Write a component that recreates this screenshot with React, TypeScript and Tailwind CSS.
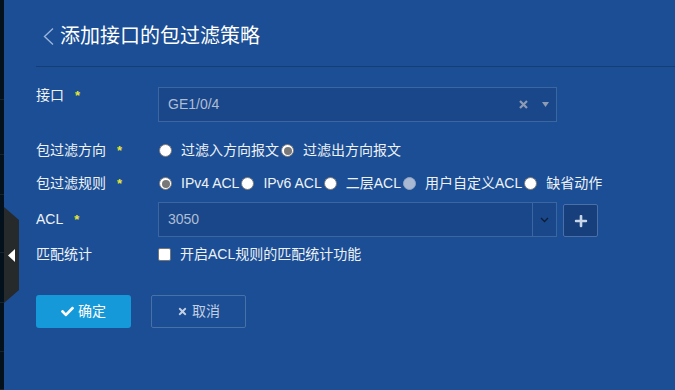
import { FaCheck, FaTimes, FaPlus } from 'react-icons/fa';

const font = { fontFamily: '"Liberation Sans", "Noto Sans CJK SC", sans-serif' };

const Star = () => <span className="ml-[11px] text-[13px] font-bold leading-none text-[#e8e830]">*</span>;

const Radio = ({ checked, disabled }: { checked?: boolean; disabled?: boolean }) => (
	<span
		className={`ml-[2px] flex h-[13px] w-[13px] shrink-0 items-center justify-center rounded-full border ${
			disabled ? 'border-[#8fa3c2] bg-[#a9b9d3]' : 'border-[#7a7a7a] bg-white'
		}`}
	>
		{checked && <span className="h-[8px] w-[8px] rounded-full bg-[#787878]" />}
	</span>
);

const RadioItem = ({ label, checked, disabled }: { label: string; checked?: boolean; disabled?: boolean }) => (
	<div className="flex items-center">
		<Radio checked={checked} disabled={disabled} />
		<span className="ml-[9px] whitespace-nowrap">{label}</span>
	</div>
);

const Label = ({ text, star = true }: { text: string; star?: boolean }) => (
	<div className="flex w-[122px] shrink-0 items-center text-[14px] text-[#eef2f8]">
		<span>{text}</span>
		{star && <Star />}
	</div>
);

export default function App() {
	const stripHeights = [100, 55, 40, 58, 50, 49, 38];
	return (
		<div className="relative flex h-[390px] w-[675px] overflow-hidden bg-[#1b4e94]" style={font}>
			<div className="flex w-[4px] shrink-0 flex-col bg-[#03111d]">
				{stripHeights.map((h, i) => (
					<div key={i} className="border-b border-[#15232e]" style={{ height: h }} />
				))}
			</div>
			{/* collapse tab */}
			<div className="absolute left-[4px] top-[207px] flex h-[96px] w-[15px] items-center bg-[#262a2b] [clip-path:polygon(0_0,100%_13px,100%_83px,0_100%)]">
				<svg width="7" height="13" viewBox="0 0 7 13" className="ml-[4px]">
					<polygon points="7,0 0,6.5 7,13" fill="#ffffff" />
				</svg>
			</div>

			<div className="flex-1 pl-[32px]">
				<div className="flex h-[67px] items-start border-b border-[#173d75] pt-[22px]">
					<svg width="11" height="17" viewBox="0 0 11 17" className="ml-[7px] mt-[6px]">
						<polyline points="10,0.5 1.5,8.5 10,16.5" fill="none" stroke="#9ab4de" strokeWidth="1.4" />
					</svg>
					<h1 className="ml-[6px] text-[20px] leading-[28px] text-white">添加接口的包过滤策略</h1>
				</div>

				<div className="text-[14px] text-[#eef2f8]">
					<div className="mt-[20px] flex h-[35px] items-start">
						<div className="-mt-[2px] flex h-[20px] items-center">
							<Label text="接口" />
						</div>
						<div className="flex h-[35px] w-[399px] items-center border border-[#3c66a2] bg-[#1a478a] pl-[9px] text-[#aebdd4]">
							<span>GE1/0/4</span>
							<svg width="9" height="9" viewBox="0 0 9 9" className="ml-auto">
								<path d="M1 1 L8 8 M8 1 L1 8" stroke="#8d9cb3" strokeWidth="2.2" />
							</svg>
							<svg width="7" height="5" viewBox="0 0 7 5" className="ml-[14px] mr-[7px]">
								<polygon points="0,0 7,0 3.5,5" fill="#8d9cb3" />
							</svg>
						</div>
					</div>

					<div className="mt-[18px] flex h-[21px] items-center">
						<Label text="包过滤方向" />
						<div className="-ml-[1px] flex items-center">
							<RadioItem label="过滤入方向报文" />
							<RadioItem label="过滤出方向报文" checked />
						</div>
					</div>

					<div className="mt-[12px] flex h-[21px] items-center">
						<Label text="包过滤规则" />
						<div className="-ml-[1px] flex items-center">
							<RadioItem label="IPv4 ACL" checked />
							<RadioItem label="IPv6 ACL" />
							<RadioItem label="二层ACL" />
							<RadioItem label="用户自定义ACL" disabled />
							<RadioItem label="缺省动作" />
						</div>
					</div>

					<div className="mt-[8px] flex h-[35px] items-center">
						<Label text="ACL" />
						<div className="flex h-[35px] w-[399px] border border-[#3c66a2] bg-[#1a478a] text-[#aebdd4]">
							<div className="flex flex-1 items-center pl-[9px]">3050</div>
							<div className="flex w-[24px] items-center justify-center border-l border-[#3c66a2]">
								<svg width="9" height="6" viewBox="0 0 9 6">
									<polyline points="1,1 4.5,4.5 8,1" fill="none" stroke="#0e1d36" strokeWidth="1.3" />
								</svg>
							</div>
						</div>
						<div className="ml-[6px] flex h-[33px] w-[35px] items-center justify-center self-end rounded-[2px] border border-[#4b70a7] bg-[#163f7b]">
							<FaPlus className="h-[14px] w-[14px] text-[#c9d5e8]" />
						</div>
					</div>

					<div className="mt-[7px] flex h-[21px] items-center">
						<Label text="匹配统计" star={false} />
						<span className="h-[13px] w-[13px] shrink-0 rounded-[2px] border border-[#777] bg-white" />
						<span className="ml-[9px]">开启ACL规则的匹配统计功能</span>
					</div>

					<div className="mt-[30px] flex">
						<button className="flex h-[33px] w-[95px] items-center justify-center rounded-[3px] bg-[#1599d8] text-white">
							<FaCheck className="h-[13px] w-[13px]" />
							<span className="ml-[4px]">确定</span>
						</button>
						<button className="ml-[20px] flex h-[33px] w-[95px] items-center justify-center rounded-[2px] border border-[#4a70a8] text-[#c3cfe2]">
							<FaTimes className="h-[11px] w-[11px]" />
							<span className="ml-[4px]">取消</span>
						</button>
					</div>
				</div>
			</div>
		</div>
	);
}
